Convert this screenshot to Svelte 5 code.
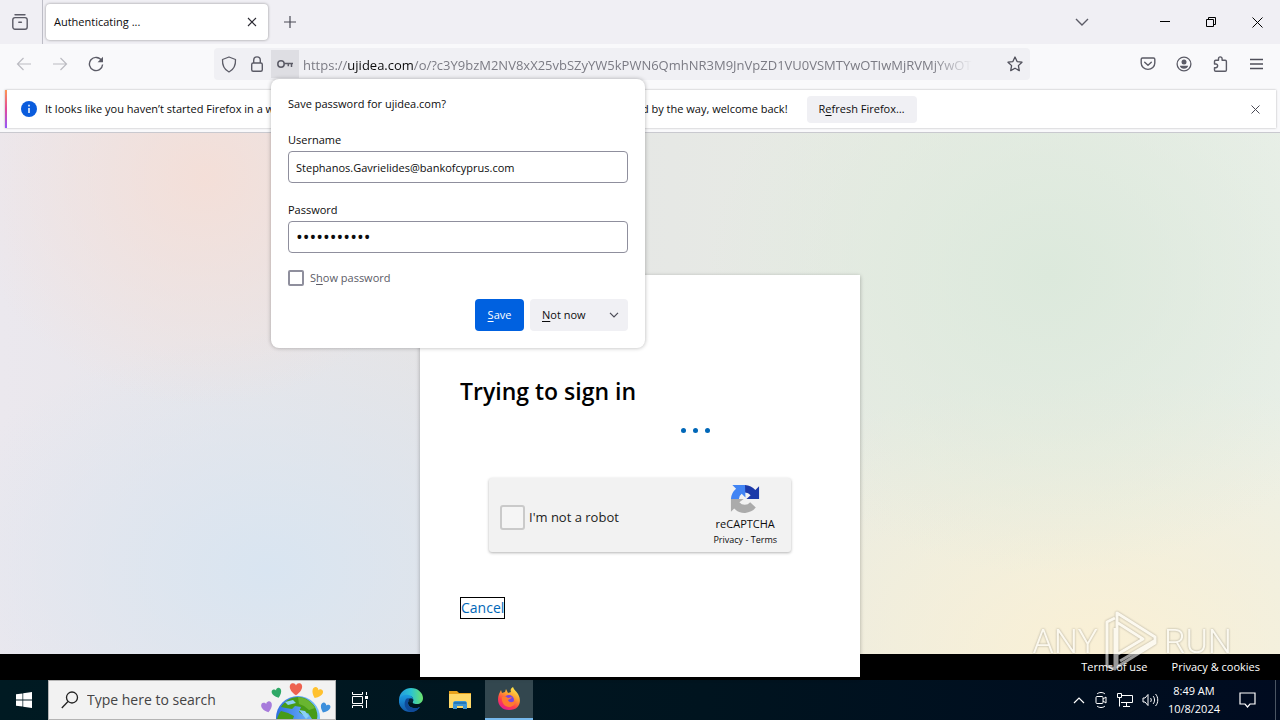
<script>
  let username = $state('Stephanos.Gavrielides@bankofcyprus.com');
  let password = $state('password123');
  let showPassword = $state(false);
</script>

<svelte:head><title>Authenticating ...</title></svelte:head>

<div class="desktop">
  <header class="tabs">
    <button class="view" aria-label="Firefox View">
      <svg width="16" height="16" viewBox="0 0 16 16" fill="none" stroke="#5b5b66" stroke-width="1.4" stroke-linecap="round"><path d="M3 .8h10" /><rect x=".8" y="3.6" width="14.4" height="11.6" rx="2.2" /><path d="M6.8 8.2h2.6" /></svg>
    </button>
    <div class="tab">
      <span>Authenticating ...</span>
      <button aria-label="Close tab"><svg width="10" height="10" viewBox="0 0 10 10" stroke="#2b2a33" stroke-width="1.1"><path d="M1 1l8 8M9 1L1 9" /></svg></button>
    </div>
    <button class="plus" aria-label="New tab"><svg width="12" height="12" viewBox="0 0 12 12" stroke="#4a4a55" stroke-width="1.2"><path d="M6 0v12M0 6h12" /></svg></button>
    <div class="grow"></div>
    <button class="win list" aria-label="List all tabs"><svg width="14" height="8" viewBox="0 0 14 8" fill="none" stroke="#5b5b66" stroke-width="1.4"><path d="M1 1l6 6 6-6" /></svg></button>
    <button class="win" aria-label="Minimize"><svg width="10" height="10" viewBox="0 0 10 10" stroke="#000"><path d="M0 4.5h10" /></svg></button>
    <button class="win" aria-label="Restore"><svg width="10" height="10" viewBox="0 0 10 10" fill="none" stroke="#000"><path d="M.5 2.500h7v7h-7zM2.500 2.500v-2h7v7h-2" /></svg></button>
    <button class="win" aria-label="Close"><svg width="11" height="11" viewBox="0 0 11 11" stroke="#000"><path d="M.5.5l10 10M10.500.5l-10 10" /></svg></button>
  </header>

  <nav class="toolbar">
    <button class="tool" aria-label="Back" disabled><svg width="16" height="16" viewBox="0 0 16 16" fill="none" stroke="#bcbcc2" stroke-width="1.2"><path d="M15 8H1.500M7.500 2L1.500 8l6 6" /></svg></button>
    <button class="tool" aria-label="Forward" disabled><svg width="16" height="16" viewBox="0 0 16 16" fill="none" stroke="#bcbcc2" stroke-width="1.200"><path d="M1 8h13.500M8.500 2l6 6-6 6" /></svg></button>
    <button class="tool" aria-label="Reload"><svg width="16" height="16" viewBox="0 0 16 16" fill="none" stroke="#5b5b66" stroke-width="1.400"><path d="M13.600 4.500A6.600 6.600 0 1 0 14.600 8.500" /><path d="M15 .8v5.400H9.600z" fill="#5b5b66" stroke="none" /></svg></button>
    <div class="urlbar">
      <button class="chip" aria-label="Tracking protection"><svg width="16" height="17" viewBox="0 0 16 17" fill="none" stroke="#5b5b66" stroke-width="1.300" stroke-linejoin="round"><path d="M8 1l6.500 2.500c.3 5.500-1.500 10-6.500 12.500C3 13.500 1.200 9 1.500 3.500z" /></svg></button>
      <button class="chip" aria-label="Site security"><svg width="14" height="16" viewBox="0 0 14 16" fill="none" stroke="#5b5b66" stroke-width="1.400"><rect x="1.700" y="7" width="10.600" height="8.200" rx="1.500" /><path d="M3.700 7V4.200a3.300 3.300 0 0 1 6.600 0V7" /></svg></button>
      <button class="chip key" aria-label="Saved password"><svg width="16" height="10" viewBox="0 0 16 10" fill="none" stroke="#5b5b66" stroke-width="1.500"><circle cx="4" cy="5" r="3.200" /><path d="M7.200 4.600H16M11.300 4.600v2.700M14.500 4.600v3.400" /></svg></button>
      <div class="address"><span class="url">https://<b>ujidea.com</b>/o/?c3Y9bzM2NV8xX25vbSZyYW5kPWN6QmhNR3M9JnVpZD1VU0VSMTYwOTIwMjRVMjYwOT</span></div>
      <button class="chip star" aria-label="Bookmark this page"><svg width="16" height="16" viewBox="0 0 16 16" fill="none" stroke="#4f4f5a" stroke-width="1.300" stroke-linejoin="round"><path d="M8 1l2.100 4.600 4.900.6-3.600 3.400.9 5L8 12.200l-4.300 2.400.9-5L1 6.200l4.900-.6z" /></svg></button>

      <form class="popup" onsubmit={(e) => e.preventDefault()}>
        <h2>Save password for ujidea.com?</h2>
        <label class="name" for="user">Username</label>
        <input id="user" class="box" type="text" bind:value={username} />
        <label class="name" for="pass">Password</label>
        <input id="pass" class="box secret" type={showPassword ? 'text' : 'password'} value={password} />
        <label class="show"><input type="checkbox" bind:checked={showPassword} /><span>S<u>h</u>ow password</span></label>
        <div class="actions">
          <button class="save"><span><u>S</u>ave</span></button>
          <button class="later" type="button"><span><u>N</u>ot now</span><svg width="10" height="6" viewBox="0 0 10 6" fill="none" stroke="#4a4a55" stroke-width="1.200"><path d="M1 .8l4 4 4-4" /></svg></button>
        </div>
      </form>
    </div>
    <button class="tool" aria-label="Save to Pocket"><svg width="16" height="16" viewBox="0 0 16 16" fill="none" stroke="#5b5b66" stroke-width="1.400" stroke-linecap="round" stroke-linejoin="round"><path d="M2.500 2h11c.8 0 1.300.5 1.300 1.300V7a6.800 6.400 0 0 1-13.600 0V3.300C1.200 2.500 1.700 2 2.500 2z" /><path d="M4.700 6.200L8 9.300l3.300-3.100" /></svg></button>
    <button class="tool" aria-label="Account"><svg width="16" height="16" viewBox="0 0 16 16"><circle cx="8" cy="8" r="6.900" fill="none" stroke="#5b5b66" stroke-width="1.300" /><circle cx="8" cy="6" r="2.500" fill="#5b5b66" /><path d="M3.800 9.800h8.400c-.4 1.900-2.200 2.900-4.200 2.900s-3.800-1-4.200-2.900z" fill="#5b5b66" /></svg></button>
    <button class="tool" aria-label="Extensions"><svg width="16" height="16" viewBox="0 0 16 16" fill="none" stroke="#5b5b66" stroke-width="1.400" stroke-linejoin="round"><path d="M2.500 8V5.500c0-.8.500-1.200 1.200-1.200h2.800V2.700a1.800 1.800 0 0 1 3.600 0v1.600h3.200c.6 0 1.100.4 1.100 1.100v8.500c0 .8-.5 1.300-1.200 1.300H3.700c-.8 0-1.200-.5-1.200-1.200v-2.300h1.300a1.800 1.800 0 0 0 0-3.700z" /></svg></button>
    <button class="tool" aria-label="Application menu"><svg width="13" height="12" viewBox="0 0 13 12" stroke="#4f4f5a" stroke-width="1.300"><path d="M0 1.500h13M0 6h13M0 10.500h13" /></svg></button>
  </nav>

  <div class="noticebar">
    <div class="notice">
      <svg width="16" height="16" viewBox="0 0 16 16"><circle cx="8" cy="8" r="8" fill="#0a5cdd" /><path d="M8 7v5M8 3.800v1.700" stroke="#fff" stroke-width="1.500" /></svg>
      <p><span>It looks like you haven’t started Firefox in a while. Do you want to clean it up for a fresh, like-new experience?</span> <span>And by the way, welcome back!</span></p>
      <button class="refresh"><span>R<u>e</u>fresh Firefox…</span></button>
      <button class="dismiss" aria-label="Dismiss"><svg width="9" height="9" viewBox="0 0 9 9" stroke="#4a4a55"><path d="M.5.5l8 8M8.500.5l-8 8" /></svg></button>
    </div>
  </div>

  <div class="page">
    <main class="card">
      <h1>Trying to sign in</h1>
      <div class="dots"><i></i><i></i><i></i></div>
      <div class="captcha">
        <label><input type="checkbox" /><span>I'm not a robot</span></label>
        <div class="brand">
          <svg width="30" height="30" viewBox="0 0 64 64">
            <path d="M62 32V5l-8 8A30 30 0 0 0 32 2v16a16 16 0 0 1 12 6l-9 8z" fill="#1c3aa9" />
            <path d="M32 2H5l8 8A30 30 0 0 0 2 32h17a15 15 0 0 1 6-11l8 8z" fill="#4285f4" />
            <path d="M2 32v27l7-7a30 30 0 0 0 46-2L43 39a15 15 0 0 1-23 0l9-7z" fill="#ababab" />
          </svg>
          <strong>reCAPTCHA</strong>
          <small><a href="#privacy">Privacy</a> - <a href="#terms">Terms</a></small>
        </div>
      </div>
      <a class="cancel" href="#cancel">Cancel</a>
    </main>
    <footer><a href="#use">Terms of use</a><a href="#cookies">Privacy &amp; cookies</a></footer>
    <div class="mark">
      <span>ANY</span>
      <svg width="56" height="62" viewBox="0 0 56 62" fill="none" stroke="#fff" stroke-width="3" stroke-linejoin="round"><path d="M12 8L4 12v44l8 3V18" /><path d="M14 3l38 24v6L14 57zM15 13l25 16-25 15M17 51l34-20" /></svg>
      <span>RUN</span>
    </div>
  </div>

  <footer class="taskbar">
    <button class="task" aria-label="Start"><svg width="16" height="16" viewBox="0 0 16 16" fill="#fff"><path d="M0 2.300l6.500-.9v6.200H0zM7.200 1.300L16 0v7.600H7.200zM0 8.400h6.500v6.200L0 13.700zM7.200 8.400H16V16l-8.800-1.300z" /></svg></button>
    <label class="search">
      <svg width="18" height="18" viewBox="0 0 18 18" fill="none" stroke="#222" stroke-width="1.300"><circle cx="11" cy="6.500" r="5.500" /><path d="M7 10.500L.8 17" /></svg>
      <input type="text" placeholder="Type here to search" aria-label="Type here to search" />
      <svg class="earth" width="72" height="38" viewBox="0 0 72 38">
        <defs>
          <linearGradient id="sea" x1="0" x2="1"><stop offset="0" stop-color="#2f6fe0" /><stop offset="1" stop-color="#7cc4ff" /></linearGradient>
          <path id="heart" d="M0 5.500C-8 0-5.500-5.500-2.500-5-1-5-.3-4 0-3 .3-4 1-5 2.500-5 5.500-5.500 8 0 0 5.500z" />
        </defs>
        <circle cx="37" cy="37" r="22" fill="url(#sea)" />
        <path d="M20 26c4-6 10-10 17-10 7 0 13 4 17 10 2 4 3 8 2 12h-5l-4-6-5 2-4-3 2-5-6-1-3 3-6-1zM20 30l7 2 6 3-1 3H16c1-3 2-6 4-8z" fill="#479b18" />
        <path d="M37 16c8 1 14 5 17 11l-6 2-5-4-5-2z" fill="#69b530" />
        <path d="M24 21l8-2 3 3-8 2zM38 29l6 1 4 5-3 3z" fill="#8bd0f5" />
        <use href="#heart" transform="translate(35 8) scale(1.150)" fill="#ee6250" />
        <use href="#heart" transform="translate(16 12) rotate(-20) scale(.9)" fill="#2fa866" />
        <use href="#heart" transform="translate(56 12) rotate(25)" fill="#ffc12e" />
        <use href="#heart" transform="translate(6 26) rotate(-15)" fill="#a77bdb" />
        <use href="#heart" transform="translate(64 27) rotate(25) scale(.9)" fill="#3c8fdc" />
      </svg>
    </label>
    <button class="task" aria-label="Task View"><svg width="17" height="16" viewBox="0 0 17 16" fill="none" stroke="#fff"><path d="M.5 0v2.500h10V0M.5 16v-2.500h10V16M.5 4.500h10v7H.5zM14.500 0v3M14.500 8v8" /><path d="M13 4h3v3h-3z" fill="#fff" stroke="none" /></svg></button>
    <button class="task edge" aria-label="Edge">
      <svg width="24" height="24" viewBox="0 0 24 24">
        <defs>
          <linearGradient id="e1" x1="0" x2="1"><stop offset="0" stop-color="#2499dc" /><stop offset=".5" stop-color="#2bc3d2" /><stop offset="1" stop-color="#6be36b" /></linearGradient>
          <linearGradient id="e2" x1="0" y1="0" x2="0" y2="1"><stop offset="0" stop-color="#1b9de2" /><stop offset="1" stop-color="#1257a8" /></linearGradient>
        </defs>
        <path d="M0 11C1 4 6 0 12 0c7 0 12 5 12 10 0 4-3 6-6 6-4 0-5-1-4-3 1-3-1-5-4-5-5 0-8 2-10 3z" fill="url(#e1)" />
        <path d="M0 11c2-4 6-5 10-4 3 1 5 3 4 6-2-2-5-1-5 2 0 4 6 7 12 4-3 4-7 5-10 5C4 24-1 18 0 11z" fill="url(#e2)" />
        <path d="M7 11c-3 5-1 11 5 13 4 0 7-2 9-5-6 3-12 0-12-4 0-2 1-3 3-4-2-1-4-1-5 0z" fill="#0f4a98" />
        <circle cx="12" cy="12.500" r="2.300" fill="#06243c" />
      </svg>
    </button>
    <button class="task" aria-label="File Explorer"><svg width="22" height="18" viewBox="0 0 22 18"><path d="M0 0h8l2 2h12v4H0z" fill="#e8a21c" /><path d="M0 3h22v14H0z" fill="#ffd868" /><path d="M4 18v-6c0-1 1-2 2-2h10c1 0 2 1 2 2v6h-4v-3H8v3z" fill="#3f96d5" /><path d="M5 11h12v2H5z" fill="#2678b8" /></svg></button>
    <button class="task active" aria-label="Firefox">
      <svg width="24" height="24" viewBox="0 0 24 24">
        <defs><linearGradient id="fox" x1=".8" y1="0" x2=".25" y2="1"><stop offset="0" stop-color="#fff44f" /><stop offset=".4" stop-color="#ff9a2e" /><stop offset=".7" stop-color="#ff3f4b" /><stop offset="1" stop-color="#e3189a" /></linearGradient></defs>
        <path d="M2 7l2-4 1 3 3-1 1-3 2 4 3-1c-1-2 0-4 2-5 1 3 3 4 5 7 4 7 2 16-9 16C3 23-1 15 2 7z" fill="url(#fox)" />
        <circle cx="12" cy="13" r="5" fill="#7a45e0" />
        <path d="M5 10c3-1 5 0 6 1l4-1c-1 2-3 2-4 3 1 3 5 3 7 0 1 4-2 7-6 7s-8-4-7-10z" fill="#ff7a2f" />
      </svg>
    </button>
    <div class="grow"></div>
    <div class="tray">
      <svg width="12" height="7" viewBox="0 0 12 7" fill="none" stroke="#fff" stroke-width="1.200"><path d="M1 6l5-5 5 5" /></svg>
      <svg width="14" height="16" viewBox="0 0 12 16" fill="none" stroke="#fff"><rect x="1" y="4.500" width="7" height="7" rx="1" /><path d="M8 7l3-2v6L8 9M2 2c2-2 6-2 8 0M2 14c2 2 6 2 8 0" /></svg>
      <svg width="16" height="14" viewBox="0 0 16 14" fill="none" stroke="#fff"><path d="M5 2.500h10.500v7H4M.5.5h4v4h-4zM2.500 4.500v9M9.500 9.500v4M6 13.500h7" /></svg>
      <svg width="17" height="14" viewBox="0 0 17 14" fill="none" stroke="#fff"><path d="M1 5h2l3-3.500v11L3 9H1zM8.500 5c1 1 1 3 0 4M11 3c2 2 2 6 0 8M13.500 1c3 3 3 9 0 12" /></svg>
    </div>
    <div class="clock"><span>8:49 AM</span><span>10/8/2024</span></div>
    <button class="action" aria-label="Notifications"><svg width="17" height="16" viewBox="0 0 17 16" fill="none" stroke="#fff" stroke-width="1.200"><path d="M1 1h15v11h-5l-2.500 3L6 12H1z" /></svg></button>
  </footer>
</div>

<style>
  :global(body) { margin: 0; }
  * { box-sizing: border-box; }
  .desktop { display: flex; flex-direction: column; min-height: 100vh; font: 11px/16px "Open Sans", "Noto Sans", sans-serif; color: #0c0c0d; background: #f9f9fb; }
  button { display: flex; align-items: center; justify-content: center; padding: 0; border: 0; background: none; font: inherit; color: inherit; }
  input { font: inherit; color: inherit; margin: 0; }
  svg { display: block; flex: none; }
  a { color: inherit; text-decoration: none; }
  u { text-underline-offset: 2px; }
  .grow { flex: 1; }

  .tabs { display: flex; align-items: stretch; height: 44px; background: #f0eff4; }
  .view { width: 43px; border-right: 1px solid #bdbdc6; padding-right: 3px; }
  .tab { display: flex; align-items: center; justify-content: space-between; width: 222px; margin: 4px 0 4px 3px; padding: 0 8px; border-radius: 4px; background: #fff; box-shadow: 0 0 3px rgba(0, 0, 0, .4); }
  .tab button { width: 16px; height: 16px; }
  .plus { width: 44px; }
  .win { width: 46px; }
  .list { margin-right: 37px; }

  .toolbar { display: flex; align-items: center; height: 40px; padding: 0 6px; }
  .tool { width: 36px; height: 32px; }
  .urlbar { position: relative; flex: 1; min-width: 0; display: flex; align-items: center; height: 32px; margin: 0 100px; padding: 0 1px; border-radius: 4px; background: #f0f0f4; }
  .chip { width: 28px; height: 28px; flex: none; }
  .key { background: #dedee3; }
  .address { flex: 1; min-width: 0; margin-left: 4px; padding-top: 2px; overflow: hidden; white-space: nowrap; font-size: 13px; line-height: 20px; color: #7b7b84; }
  .url { display: inline-block; -webkit-mask-image: linear-gradient(to left, transparent, #000 40px); mask-image: linear-gradient(to left, transparent, #000 40px); }
  .url b { font-weight: 400; color: #0c0c0d; }
  .star { margin-left: 4px; }

  .popup { position: absolute; z-index: 5; top: 31px; left: 57px; width: 374px; padding: 17px; border-radius: 8px; background: #fff; box-shadow: 0 0 4px rgba(0, 0, 0, .3); display: flex; flex-direction: column; }
  h2 { margin: 0 0 20px; font: inherit; }
  .name { margin-bottom: 3px; }
  .box { height: 32px; margin-bottom: 19px; padding: 0 7px; border: 1px solid #8f8f9d; border-radius: 4px; background: #fff; }
  .secret { margin-bottom: 17px; font-size: 18px; }
  .show { display: flex; align-items: center; gap: 6px; color: #5b5b66; }
  .show input { appearance: none; width: 16px; height: 16px; border: 2px solid #8f8f9d; border-radius: 2px; }
  .actions { display: flex; justify-content: flex-end; gap: 6px; margin-top: 13px; }
  .actions button { height: 32px; padding: 0 12px; border-radius: 4px; }
  .actions .save { width: 49px; background: #0061e0; color: #fff; }
  .actions .later { width: 98px; padding-right: 9px; justify-content: space-between; background: #f0f0f4; }

  .noticebar { padding: 6px 4px 4px 5px; border-bottom: 1px solid #c9c9cf; }
  .notice { display: flex; align-items: center; height: 38px; padding: 0 12px 0 14px; border-left: 2px solid; border-image: linear-gradient(#ff9a4d, #e2489b, #9059ff) 1; background: #fff; box-shadow: 0 0 2px rgba(0, 0, 0, .3); }
  .notice p { display: flex; gap: 28px; margin: 0 19px 0 8px; white-space: nowrap; }
  .refresh { height: 27px; padding: 0 12px; border-radius: 4px; background: #f0f0f4; white-space: nowrap; }
  .dismiss { width: 18px; height: 18px; margin-left: auto; }

  .page { position: relative; flex: 1; display: grid; grid-template-rows: 1fr 26px;
    background:
      radial-gradient(ellipse 240px 230px at 16% 8%, rgba(245, 222, 214, .9) 0%, rgba(245, 222, 214, 0) 100%),
      radial-gradient(ellipse 340px 240px at 21% 80%, #d9e5f1 0%, rgba(217, 229, 241, 0) 100%),
      radial-gradient(ellipse 340px 300px at 82% 26%, #dce9dc 0%, rgba(220, 233, 220, 0) 100%),
      radial-gradient(ellipse 460px 280px at 86% 95%, #faf0d5 0%, rgba(250, 240, 213, 0) 100%),
      linear-gradient(90deg, #ebe8ee, #e4e4e6 35%, #e8ece4 70%, #eaf0e9); }
  .page footer { grid-area: 2 / 1; display: flex; align-items: center; justify-content: flex-end; gap: 24px; padding-right: 20px; background: #000; color: #fff; }
  .card { grid-area: 1 / 1 / 3 / 2; z-index: 1; justify-self: center; align-self: end; width: 440px; margin-bottom: 3px; padding: 100px 40px 58px; background: #fff; box-shadow: 0 1px 4px rgba(0, 0, 0, .3); }
  h1 { margin: 0; font-size: 23px; line-height: 32px; font-weight: 600; color: #000; }
  .dots { display: flex; gap: 7px; margin: 21px 0 45px 221px; }
  .dots i { width: 5px; height: 5px; border-radius: 50%; background: #0067b8; }
  .captcha { display: flex; align-items: center; justify-content: space-between; width: 302px; height: 74px; margin: 0 auto 45px 29px; padding: 0 14px 0 11px; border-radius: 3px; background: #f2f2f2; box-shadow: 0 1px 3px rgba(0, 0, 0, .3); }
  .captcha label { display: flex; align-items: center; gap: 4px; padding-top: 4px; font-size: 13px; color: #222; }
  .captcha input { appearance: none; width: 25px; height: 25px; border: 2px solid #cacaca; border-radius: 3px; background: #f5f5f5; }
  .brand { display: flex; flex-direction: column; align-items: center; }
  .brand strong { font-weight: 400; font-size: 11px; line-height: 20px; }
  .brand small { font-size: 9px; line-height: 12px; }
  .cancel { display: inline-block; border: 1px solid #000; font-size: 14px; line-height: 20px; color: #0067b8; }
  .mark { position: absolute; z-index: 2; right: 48px; bottom: 8px; display: flex; align-items: center; gap: 5px; opacity: .6; color: #fff; font: 300 34px/48px "Roboto", sans-serif; filter: drop-shadow(0 0 1px rgba(0, 0, 0, .5)); pointer-events: none; }

  .taskbar { display: flex; align-items: stretch; height: 40px; background: linear-gradient(90deg, #001a22, #00141f 55%, #000b20); color: #fff; }
  .task { width: 48px; }
  .task + .task { margin-left: 1px; }
  .task + .edge { margin-left: 3px; }
  .search { display: flex; align-items: center; width: 288px; padding-left: 12px; border: 1px solid #b4b4b4; background: #f2f2f2; color: #444; }
  .search input { flex: 1; min-width: 0; margin-left: 8px; padding: 0; border: 0; background: none; font-size: 14px; outline: 0; }
  .search input::placeholder { color: #444; opacity: 1; }
  .earth { align-self: flex-end; margin-right: 2px; }
  .active { background: #33474f; border-bottom: 2px solid #76b9ed; }
  .tray { display: flex; align-items: center; gap: 9px; margin-right: 9px; }
  .clock { display: flex; flex-direction: column; align-items: center; justify-content: center; line-height: 18px; }
  .action { width: 56px; margin-right: 4px; border-right: 1px solid #4a5563; }
</style>
